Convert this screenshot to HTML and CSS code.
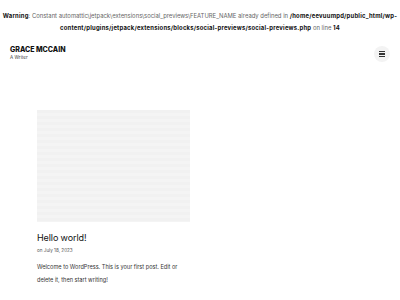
FILE: index.html
```html
<!DOCTYPE html>
<html>
<head>
<meta charset="utf-8">
<link rel="stylesheet" href="styles.css">
</head>
<body>
<div class="warning"><b class="lbl">Warning</b>: Constant automattic\jetpack\extensions\social_previews\FEATURE_NAME already defined in <b>/home/eevuumpd/public_html/wp-</b><b>content/plugins/jetpack/extensions/blocks/social-previews/social-previews.php</b> on line <b>14</b></div>
<header class="site-header">
  <div class="brand">
    <div class="title">GRACE MCCAIN</div>
    <div class="tagline">A Writer</div>
  </div>
  <button class="menu" aria-label="menu">
    <span></span><span></span><span></span>
  </button>
</header>
<main class="main">
  <article class="post">
    <div class="thumb"></div>
    <h2 class="post-title">Hello world!</h2>
    <div class="meta">on July 18, 2023</div>
    <p class="excerpt">Welcome to WordPress. This is your first post. Edit or delete it, then start writing!</p>
  </article>
</main>
</body>
</html>
```

FILE: styles.css
```css
html, body { margin: 0; padding: 0; background: #fff; }
body { font-family: Inter, "Noto Sans", sans-serif; color: #222; }
.warning {
  padding: 10px 2px 0;
  font-size: 5.9px;
  line-height: 12px;
  text-align: center;
  color: #666;
}
.warning b { color: #111; font-weight: 700; letter-spacing: 0.22px; }
.site-header {
  display: flex;
  justify-content: space-between;
  align-items: center;
  padding: 10px 10px 0 10px;
}
.title { font-weight: 800; font-size: 7px; color: #111; line-height: 9px; }
.tagline { font-size: 4.6px; color: #444; line-height: 7px; }
.menu {
  width: 16px; height: 16px; border-radius: 50%;
  background: #f3f3f3; border: none; padding: 0;
  display: flex; flex-direction: column; justify-content: center; align-items: center; gap: 1.2px;
  margin-top: 2px;
}
.menu span { display: block; width: 6px; height: 1.2px; background: #333; }
.main { padding: 48px 0 0 37px; }
.post { width: 153px; }
.thumb {
  height: 112px;
  background: repeating-linear-gradient(180deg, #f1f1f1 0, #f1f1f1 3px, #f4f4f4 3px, #f4f4f4 6px);
}
.post-title { margin: 10px 0 0; font-size: 9px; font-weight: 400; color: #111; line-height: 12px; letter-spacing: -0.1px; }
.meta { margin-top: 3px; font-size: 4.6px; color: #555; line-height: 7px; }
.excerpt { margin: 7px 0 0; font-size: 5.6px; line-height: 13px; color: #333; }
```
